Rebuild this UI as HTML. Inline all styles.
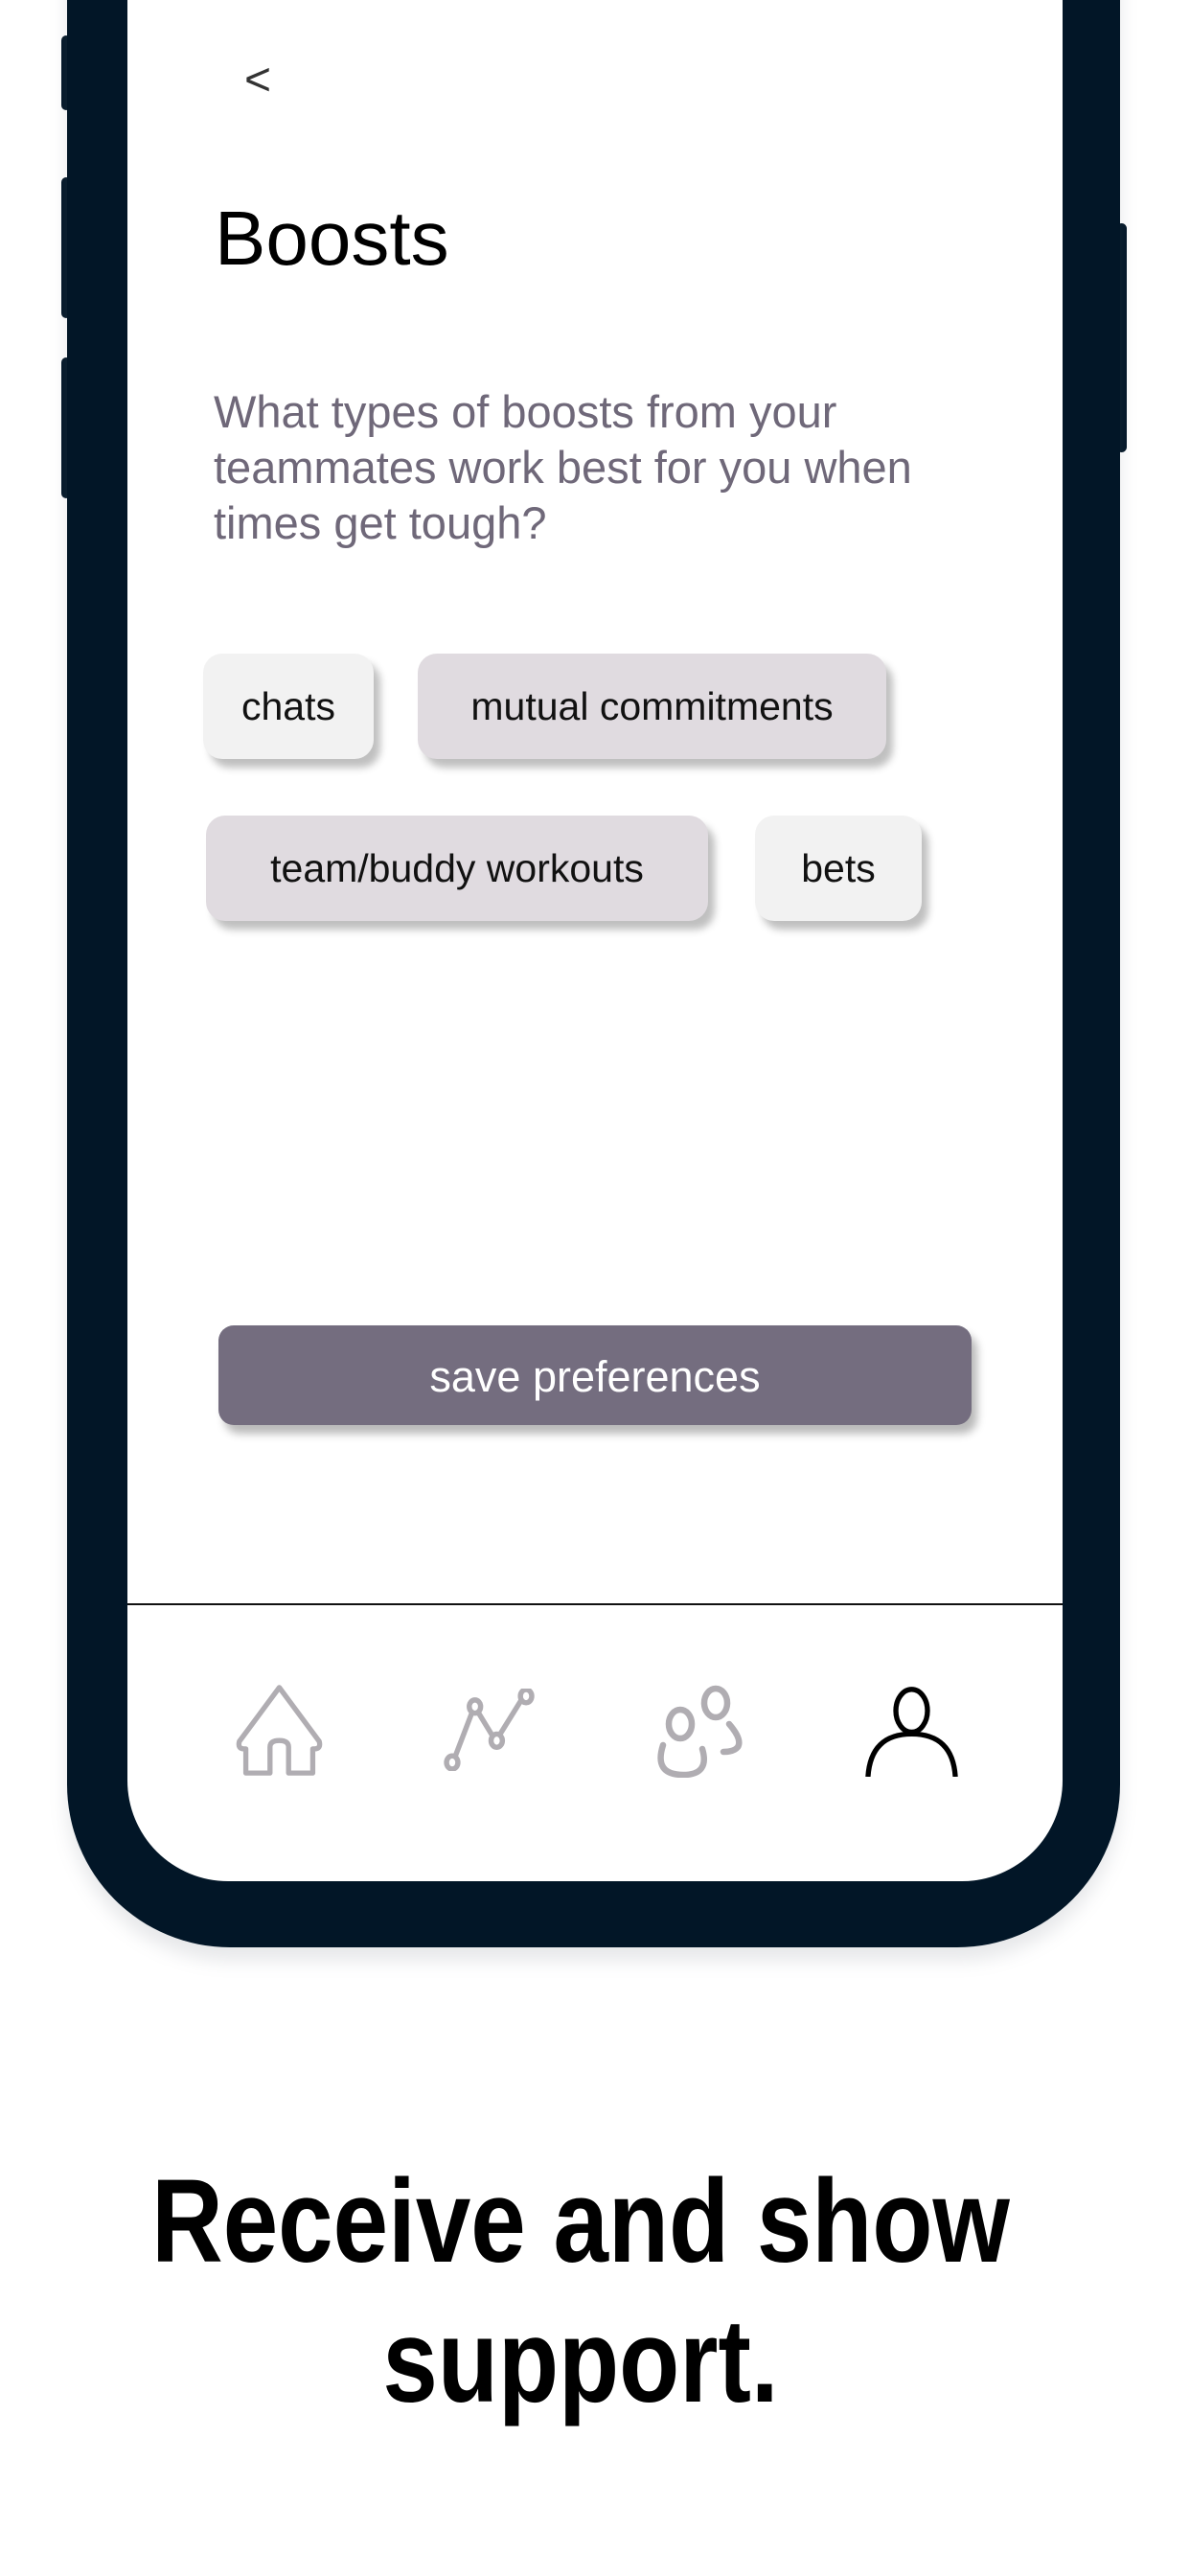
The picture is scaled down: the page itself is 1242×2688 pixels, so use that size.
<!DOCTYPE html>
<html><head><meta charset="utf-8"><style>
*{margin:0;padding:0;box-sizing:border-box}
html,body{width:1242px;height:2688px;background:#fff;overflow:hidden;position:relative;font-family:"Liberation Sans",sans-serif}
.abs{position:absolute}
.frame{left:70px;top:-200px;width:1099px;height:2232px;background:#021627;border-radius:0 0 170px 170px;box-shadow:0 14px 18px rgba(120,130,140,0.18)}
.screen{left:133px;top:-200px;width:976px;height:2163px;background:#fff;border-radius:0 0 105px 105px}
.btn{background:#021627;border-radius:6px}
.chip{position:absolute;height:110px;border-radius:20px;box-shadow:7px 9px 8px rgba(0,0,0,0.25);font-size:41px;color:#111;display:flex;align-items:center;justify-content:center}
.l{background:#f2f2f2}.d{background:#e0dbe0}
</style></head><body>
<div class="abs btn" style="left:64px;top:37px;width:10px;height:78px"></div>
<div class="abs btn" style="left:64px;top:185px;width:10px;height:147px"></div>
<div class="abs btn" style="left:64px;top:373px;width:10px;height:147px"></div>
<div class="abs btn" style="left:1165px;top:233px;width:11px;height:239px"></div>
<div class="abs frame"></div>
<div class="abs screen"></div>
<div class="abs" style="left:255px;top:56px;font-size:48px;color:#333">&lt;</div>
<div class="abs" style="left:224px;top:201px;font-size:80px;color:#000;line-height:96px">Boosts</div>
<div class="abs" style="left:223px;top:401px;width:800px;font-size:47px;line-height:58px;color:#6f6879">What types of boosts from your<br>teammates work best for you when<br>times get tough?</div>
<div class="chip l" style="left:212px;top:682px;width:178px">chats</div>
<div class="chip d" style="left:436px;top:682px;width:489px">mutual commitments</div>
<div class="chip d" style="left:215px;top:851px;width:524px">team/buddy workouts</div>
<div class="chip l" style="left:788px;top:851px;width:174px">bets</div>
<div class="abs" style="left:228px;top:1383px;width:786px;height:104px;background:#746d7f;border-radius:16px;box-shadow:6px 9px 9px rgba(0,0,0,0.28);color:#fff;font-size:45px;display:flex;align-items:center;justify-content:center;padding-top:4px">save preferences</div>
<div class="abs" style="left:133px;top:1673px;width:976px;height:2px;background:#111"></div>
<svg class="abs" style="left:242px;top:1757px" width="99" height="97" viewBox="0 0 100 100" fill="none" stroke="#b0adb2" stroke-width="5.5" stroke-linejoin="round">
<path d="M50 4 L7 62 Q5 70 12 70 L14 70 L14 96 L40 96 L40 68 Q40 61 50 61 Q60 61 60 68 L60 96 L86 96 L86 70 L88 70 Q95 70 93 62 Z"/></svg>
<svg class="abs" style="left:463px;top:1762px" width="99" height="86" viewBox="0 0 100 87" fill="none" stroke="#b0adb2" stroke-width="5.5">
<path d="M12 72 L30 25 M37 26 L51 49 M59 49 L82 12"/>
<ellipse cx="9" cy="78" rx="6" ry="7"/><ellipse cx="33" cy="19" rx="6" ry="7"/><ellipse cx="56" cy="55" rx="6" ry="7"/><ellipse cx="87" cy="8" rx="6" ry="7"/></svg>
<svg class="abs" style="left:683px;top:1755px" width="95" height="100" viewBox="0 0 95 100" fill="none" stroke="#b0adb2" stroke-width="6.5" stroke-linecap="round">
<ellipse cx="27" cy="44" rx="12" ry="15"/><ellipse cx="64" cy="22" rx="12" ry="15"/>
<path d="M9 66 Q-1 97 30 97 Q58 97 50 70"/><path d="M78 44 Q92 60 87 68 Q83 73 72 73"/></svg>
<svg class="abs" style="left:903px;top:1757px" width="97" height="97" viewBox="0 0 100 100" fill="none" stroke="#000" stroke-width="5.5">
<ellipse cx="50" cy="29" rx="17" ry="23"/><path d="M3 100 Q6 54 50 54 Q94 54 97 100"/></svg>
<div class="abs" style="left:-15px;top:2246px;width:1242px;text-align:center;font-weight:bold;font-size:123px;line-height:146px;color:#000;transform:scaleX(0.84);transform-origin:621px 0">Receive and show<br>support.</div>
</body></html>
